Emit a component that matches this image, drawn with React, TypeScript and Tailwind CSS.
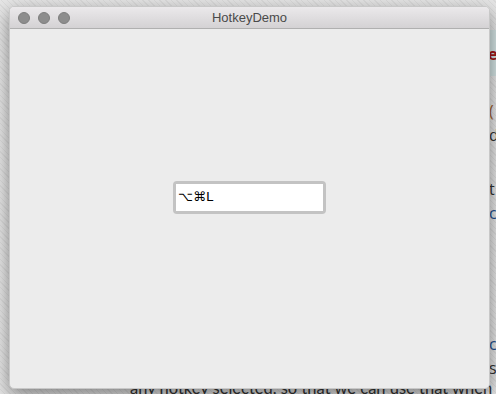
import React from 'react';

// --- Desktop backdrop (page behind the window) ---

const Backdrop = () => (
  <div className="absolute inset-0 flex flex-col bg-[#e2e2e2] bg-[repeating-linear-gradient(45deg,#e6e6e6_0px,#e6e6e6_3px,#dcdcdc_3px,#dcdcdc_4px)] font-['Open_Sans',sans-serif] text-[16px] leading-[24px] text-[#333]">
    <div className="h-[30px] shrink-0" />
    <div className="h-[46px] shrink-0 ml-[478px] bg-[#d3e3e3] flex items-center pl-[10px] pt-[4px]">
      <span className="text-[16px] font-bold text-[#a01818] font-['DejaVu_Sans_Mono',monospace]">ex</span>
    </div>
    <div className="ml-[489px] flex flex-col shrink-0 pt-[23px]">
      <p className="text-[#a06030]">(</p>
      <p>d</p>
      <p className="mt-[30px]">t</p>
      <p className="text-[#1d4f8f]">c</p>
      <p className="mt-[107px] text-[#1d4f8f]">c</p>
      <p>s</p>
    </div>
    <p className="ml-[130px] -mt-[4px] shrink-0 whitespace-nowrap font-['Lato',sans-serif] text-[16.5px]">any hotkey selected, so that we can use that when the a</p>
  </div>
);

// --- Traffic lights ---

const Light = () => <span className="w-[12px] h-[12px] rounded-full bg-[#8d8d8d] border border-[#7e7e7e]" />;

export default function App() {
  return (
    <div className="relative w-[496px] h-[394px] overflow-hidden">
      <Backdrop />
      <div className="absolute left-[9px] top-[6px] w-[481px] h-[383px] rounded-[5px] overflow-hidden flex flex-col bg-[#ececec] shadow-[0_6px_18px_rgba(0,0,0,0.45)] border border-[#c8c8c8]">
        <div className="relative h-[22px] shrink-0 flex items-center px-[8px] gap-[8px] bg-gradient-to-b from-[#ebe9eb] to-[#d4d2d4] border-b border-[#b0b0b0]">
          <Light />
          <Light />
          <Light />
          <span className="absolute inset-0 flex items-center justify-center text-[13px] text-[#4a4a4a] font-['Liberation_Sans',sans-serif]">
            HotkeyDemo
          </span>
        </div>
        <div className="flex-1 flex items-center justify-center pb-[23px]">
          <div className="w-[153px] h-[33px] rounded-[4px] bg-[#c3c3c3] p-[3px]">
            <div className="w-full h-full bg-white flex items-center pl-[2px] text-[13px] text-black font-['DejaVu_Sans',sans-serif]">
              ⌥⌘L
            </div>
          </div>
        </div>
      </div>
    </div>
  );
}
